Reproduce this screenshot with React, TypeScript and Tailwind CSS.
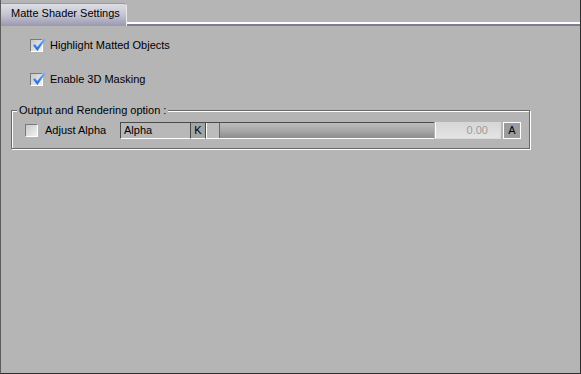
import React from "react";

const font = { fontFamily: '"Liberation Sans", Arial, sans-serif' };

const CheckBox = ({ checked }: { checked?: boolean }) => (
  <div className="relative w-[13px] h-[13px] shrink-0 border border-[#7a7a7a] border-r-white border-b-white bg-gradient-to-br from-[#c8c8c8] to-[#f2f2f2]">
    {checked && (
      <svg className="absolute -left-[1px] -top-[4px]" width="17" height="17" viewBox="0 0 17 17">
        <defs>
          <linearGradient id="chk" x1="0" y1="0" x2="0" y2="1">
            <stop offset="0" stopColor="#6fb0ff" />
            <stop offset="1" stopColor="#1f63d8" />
          </linearGradient>
        </defs>
        <path d="M3 9.5 L5 8 L7.2 11 L14 2.5 L15.5 3.5 L7.4 15 Z" fill="url(#chk)" />
      </svg>
    )}
  </div>
);

export default function App() {
  return (
    <div
      className="w-[581px] h-[374px] bg-[#b5b5b5] border-l border-l-[#5c5c5c] border-r border-r-[#2e2e2e] border-b border-b-[#2e2e2e] flex flex-col text-[11px] text-black"
      style={font}
    >
      {/* tab strip */}
      <div className="flex h-[26px] shrink-0">
        <div className="mt-[3px] w-[126px] h-[23px] rounded-tr-[4px] border-r border-r-[#e8e8e8] border-t border-t-[#9a9a9a] bg-gradient-to-b from-[#dedee6] via-[#c4c4d0] to-[#9a98b0] pl-[10px] pt-[3px] leading-[13px]">
          Matte Shader Settings
        </div>
        <div className="flex-1 flex flex-col justify-end">
          <div className="h-[2px] bg-white" />
          <div className="h-[2px] bg-[#7c7a94]" />
        </div>
      </div>

      <div className="flex flex-col pl-[29px] pt-[12px]">
        <label className="flex items-center gap-[7px] h-[14px]">
          <CheckBox checked />
          <span>Highlight Matted Objects</span>
        </label>
        <label className="flex items-center gap-[7px] h-[14px] mt-[20px]">
          <CheckBox checked />
          <span>Enable 3D Masking</span>
        </label>
      </div>

      {/* group box */}
      <div className="relative ml-[10px] mt-[24px] w-[519px] h-[39px] border border-[#6a6a6a] shadow-[1px_1px_0_#ffffff,inset_1px_1px_0_#ffffff]">
        <span className="absolute -top-[8px] left-[5px] px-[2px] bg-[#b5b5b5] leading-[14px]">
          Output and Rendering option :
        </span>
        <div className="flex items-center h-full pl-[13px] pt-[1px]">
          <CheckBox />
          <span className="ml-[7px] w-[75px]">Adjust Alpha</span>
          <div className="flex items-stretch h-[17px]">
            <div className="w-[70px] border-t border-l border-[#4a4a4a] border-b border-b-white bg-[#b8b8b8] pl-[3px] flex items-center">
              Alpha
            </div>
            <div className="w-[16px] border border-[#4a4a4a] border-b-white bg-[#a4a4a4] flex items-center justify-center">
              K
            </div>
            <div className="relative w-[228px] border-t border-[#4a4a4a] border-b border-b-white bg-gradient-to-b from-[#bcbcbc] via-[#a8a8a8] to-[#8c8c8c]">
              <div className="absolute left-0 top-0 w-[14px] h-full bg-[#bcbcbc] border-l border-l-white border-r border-r-[#6a6a6a]" />
            </div>
            <div className="w-[66px] ml-[1px] border border-[#d8d8d8] border-l-white bg-gradient-to-b from-[#d6d6d6] to-[#e4e4e4] flex items-center justify-end pr-[12px] text-[#9c9c9c]">
              0.00
            </div>
            <div className="w-[18px] ml-[2px] border border-white bg-[#9c9c9c] flex items-center justify-center">
              A
            </div>
          </div>
        </div>
      </div>
    </div>
  );
}
